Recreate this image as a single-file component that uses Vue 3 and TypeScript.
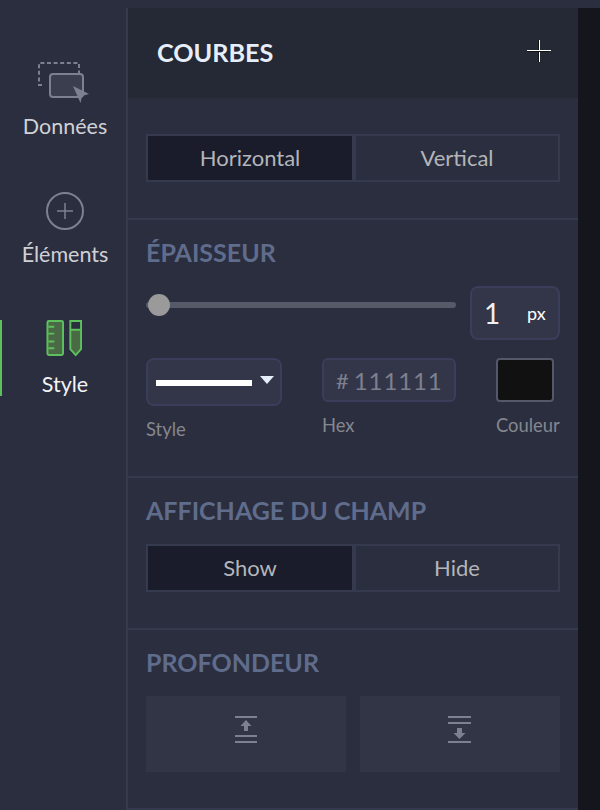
<script setup lang="ts">
import { ref } from 'vue';

const orientation = ref('Horizontal');
const visibility = ref('Show');
const thickness = ref(1);
const hex = ref('111111');
</script>

<template>
  <div class="screen">
    <aside class="sidebar">
      <div class="nav-item nav-data">
        <svg class="nav-icon" width="54" height="44" viewBox="0 0 54 44" fill="none">
          <path d="M4 23 H1 V1 H41 V11" stroke="#7d808f" stroke-width="2" stroke-dasharray="4 2.6" />
          <rect x="12" y="12" width="33" height="23" rx="3" fill="#3b3e4e" stroke="#7d808f" stroke-width="2" />
          <path d="M35 24 L51 32 L44 34 L42.5 41 Z" fill="#7d808f" />
        </svg>
        <span class="nav-label">Données</span>
      </div>
      <div class="nav-item nav-elements">
        <svg class="nav-icon" width="38" height="38" viewBox="0 0 38 38" fill="none">
          <circle cx="19" cy="19" r="18" stroke="#7d808f" stroke-width="2" />
          <path d="M19 11 V27 M11 19 H27" stroke="#7d808f" stroke-width="1.5" />
        </svg>
        <span class="nav-label">Éléments</span>
      </div>
      <div class="nav-item nav-style">
        <svg class="nav-icon" width="36" height="38" viewBox="0 0 36 38" fill="none">
          <rect x="1" y="1" width="16" height="35" rx="1.5" fill="#4a6a45" stroke="#5cc05c" stroke-width="2" />
          <path d="M2 7 H8 M2 14 H8 M2 22 H8 M2 29 H8" stroke="#5cc05c" stroke-width="2" />
          <path d="M24.5 10 H35.5 V30 L30 36 L24.5 30 Z" fill="#4a6a45" />
          <path d="M24.5 1 H35.5 V30 L30 36 L24.5 30 Z M24.5 10 H35.5" stroke="#5cc05c" stroke-width="2" />
        </svg>
        <span class="nav-label">Style</span>
      </div>
    </aside>

    <main class="panel">
      <header class="panel-header">
        <h2 class="panel-title">COURBES</h2>
        <span class="add-button"></span>
      </header>

      <section class="section section-orientation">
        <div class="segments">
          <button
            v-for="option in ['Horizontal', 'Vertical']"
            :key="option"
            class="segment"
            :class="{ 'segment--active': orientation === option }"
            @click="orientation = option"
          >
            {{ option }}
          </button>
        </div>
      </section>

      <section class="section section-thickness">
        <h3 class="section-title">ÉPAISSEUR</h3>
        <div class="slider-row">
          <div class="slider">
            <div class="slider-thumb"></div>
          </div>
          <div class="px-box">
            <span class="px-value">{{ thickness }}</span>
            <span class="px-unit">px</span>
          </div>
        </div>
        <div class="fields">
          <div class="field field-style">
            <div class="select">
              <span class="select-line"></span>
              <span class="select-arrow"></span>
            </div>
            <span class="field-label label-style">Style</span>
          </div>
          <div class="field field-hex">
            <div class="hex-input"><span class="hash">#</span>{{ hex }}</div>
            <span class="field-label">Hex</span>
          </div>
          <div class="field field-color">
            <div class="swatch"></div>
            <span class="field-label">Couleur</span>
          </div>
        </div>
      </section>

      <section class="section section-display">
        <h3 class="section-title">AFFICHAGE DU CHAMP</h3>
        <div class="segments">
          <button
            v-for="option in ['Show', 'Hide']"
            :key="option"
            class="segment"
            :class="{ 'segment--active': visibility === option }"
            @click="visibility = option"
          >
            {{ option }}
          </button>
        </div>
      </section>

      <section class="section section-depth">
        <h3 class="section-title">PROFONDEUR</h3>
        <div class="depth-buttons">
          <button class="depth-button">
            <svg width="24" height="28" viewBox="0 0 24 28" fill="#7d808f">
              <rect x="1" y="0" width="22" height="2" />
              <path d="M12 4 L17.5 10 H14 V15 H10 V10 H6.5 Z" />
              <rect x="1" y="19" width="22" height="2" />
              <rect x="1" y="25" width="22" height="2" />
            </svg>
          </button>
          <button class="depth-button">
            <svg width="24" height="28" viewBox="0 0 24 28" fill="#7d808f">
              <rect x="0" y="0" width="23" height="2" />
              <rect x="0" y="6" width="23" height="2" />
              <path d="M11.5 23 L17.5 17 H14 V12 H9 V17 H5.5 Z" />
              <rect x="0" y="25" width="23" height="2" />
            </svg>
          </button>
        </div>
      </section>
    </main>

    <div class="backdrop"></div>
  </div>
</template>

<style>
body {
  background: #14151d;
}
</style>

<style scoped>
.screen {
  display: flex;
  width: 600px;
  height: 810px;
  overflow: hidden;
  padding-top: 8px;
  box-sizing: border-box;
  background: linear-gradient(#2b2e3e 8px, transparent 8px);
  font-family: Lato, "Liberation Sans", sans-serif;
}

.sidebar {
  flex: 0 0 126px;
  min-width: 0;
  width: 126px;
  box-sizing: content-box;
  display: flex;
  flex-direction: column;
  align-items: flex-start;
  background: #2b2e3e;
  border-right: 2px solid #363a4f;
}

.nav-item {
  display: flex;
  flex-direction: column;
  align-items: center;
  box-sizing: border-box;
  width: 130px;
  flex-shrink: 0;
}

.nav-data {
  padding-top: 54px;
}

.nav-elements {
  padding-top: 54px;
}

.nav-style {
  position: relative;
  margin-top: 54px;
  height: 76px;
}

.nav-style::before {
  content: '';
  position: absolute;
  left: 0;
  top: 0;
  width: 2px;
  height: 76px;
  background: #5cc05c;
}

.nav-icon {
  display: block;
}

.nav-style .nav-icon {
  margin-right: 2px;
}

.nav-label {
  font-size: 21.5px;
  line-height: 24px;
  color: #d0d1d6;
}

.nav-data .nav-label {
  margin-top: 8px;
}

.nav-elements .nav-label {
  margin-top: 12px;
}

.nav-style .nav-label {
  margin-top: 15px;
  color: #f2f3f5;
}

.panel {
  flex: 0 0 450px;
  background: #2b2e3e;
  display: flex;
  flex-direction: column;
}

.panel-header {
  position: relative;
  height: 90px;
  flex-shrink: 0;
  display: flex;
  align-items: center;
  padding-left: 29px;
  background: #252835;
}

.panel-title {
  margin: 0 0 2px;
  font-size: 25.2px;
  font-weight: 700;
  color: #e6eefb;
}

.add-button {
  position: absolute;
  left: 399px;
  top: 32px;
  width: 24px;
  height: 22px;
  background:
    linear-gradient(#fff, #fff) 0 10px / 24px 1px no-repeat,
    linear-gradient(#111, #111) 0 11px / 22px 1px no-repeat,
    linear-gradient(#fff, #fff) 12px 0 / 1px 22px no-repeat,
    linear-gradient(#111, #111) 11px 0 / 1px 22px no-repeat;
}

.section {
  box-sizing: border-box;
  padding: 0 18px;
  border-bottom: 2px solid #363a4f;
}

.section-orientation {
  height: 122px;
  padding-top: 36px;
}

.section-thickness {
  height: 258px;
  padding-top: 17px;
}

.section-display {
  height: 152px;
  padding-top: 17px;
}

.section-depth {
  height: 180px;
  padding-top: 17px;
}

.section-title {
  margin: 0;
  font-size: 25px;
  line-height: 30px;
  font-weight: 700;
  color: #5f6c8c;
}

.segments {
  display: flex;
  height: 48px;
  box-sizing: border-box;
  border: 2px solid #363a4f;
  background: #363a4f;
  gap: 4px;
}

.section-display .segments {
  margin-top: 19px;
}

.segment {
  flex: 1;
  border: 0;
  padding: 0 0 2px;
  background: #2b2e3e;
  color: #b4b5b9;
  font-family: inherit;
  font-size: 22px;
}

.segment:first-child {
  flex: 0 0 204px;
}

.segment--active {
  background: #1a1c2b;
}

.slider-row {
  display: flex;
  align-items: flex-start;
  gap: 14px;
  margin-top: 19px;
}

.slider {
  position: relative;
  flex: 0 0 310px;
  height: 6px;
  margin-top: 16px;
  border-radius: 3px;
  background: #565968;
}

.slider-thumb {
  position: absolute;
  left: 2px;
  top: -8px;
  width: 22px;
  height: 22px;
  border-radius: 50%;
  background: #9a9a9a;
}

.px-box {
  flex: 1;
  height: 54px;
  box-sizing: border-box;
  display: flex;
  align-items: center;
  padding-left: 12px;
  border: 2px solid #3a3e5a;
  border-radius: 8px;
  background: #333648;
  color: #fff;
}

.px-value {
  width: 43px;
  font-size: 28px;
  font-weight: 400;
  color: #eef0f4;
}

.px-unit {
  font-size: 18px;
}

.fields {
  display: flex;
  margin-top: 18px;
}

.field {
  display: flex;
  flex-direction: column;
}

.field-style {
  width: 176px;
}

.field-hex {
  width: 174px;
}

.select {
  position: relative;
  width: 136px;
  height: 48px;
  box-sizing: border-box;
  border: 2px solid #3a3e5a;
  border-radius: 8px;
  background: #333648;
}

.select-line {
  position: absolute;
  left: 8px;
  top: 20px;
  width: 96px;
  height: 6px;
  background: #fff;
}

.select-arrow {
  position: absolute;
  left: 112px;
  top: 16px;
  border-left: 7px solid transparent;
  border-right: 7px solid transparent;
  border-top: 8px solid #e6eefb;
}

.hex-input {
  width: 134px;
  height: 44px;
  box-sizing: border-box;
  display: flex;
  align-items: center;
  padding-left: 12px;
  border: 2px solid #3a3e5a;
  border-radius: 6px;
  background: #333648;
  color: #7d808f;
  font-size: 24px;
  letter-spacing: 0.9px;
}

.hash {
  margin-right: 5px;
  font-size: 22px;
  letter-spacing: 0;
}

.swatch {
  width: 58px;
  height: 44px;
  box-sizing: border-box;
  border: 2px solid #55576a;
  border-radius: 4px;
  background: #111111;
}

.field-label {
  margin-top: 12px;
  font-size: 18.4px;
  line-height: 22px;
  color: #85878f;
}

.label-style {
  margin-top: 12px;
}

.depth-buttons {
  display: flex;
  gap: 14px;
  margin-top: 19px;
}

.depth-button {
  flex: 1;
  height: 76px;
  border: 0;
  padding: 0 0 8px;
  background: #323546;
  display: flex;
  align-items: center;
  justify-content: center;
}

.backdrop {
  flex: 1;
  background: #14151d;
}
</style>
